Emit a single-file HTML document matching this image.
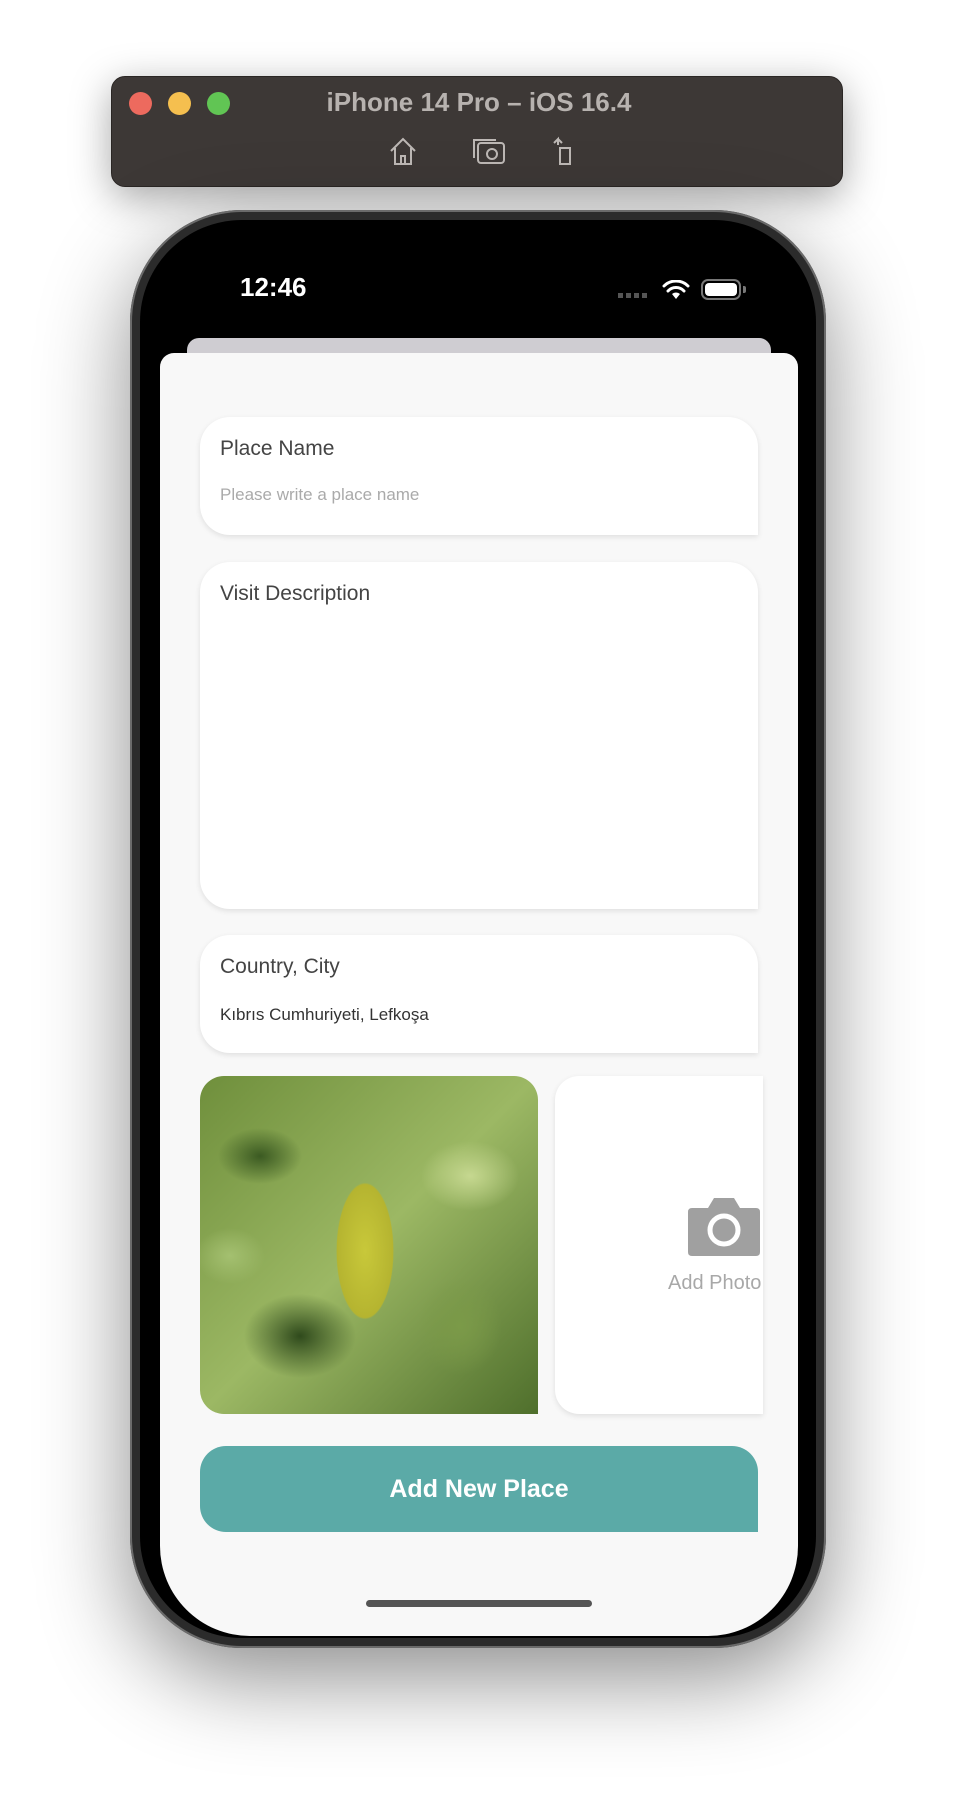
<!DOCTYPE html>
<html><head><meta charset="utf-8"><style>
*{margin:0;padding:0;box-sizing:border-box}
body{width:958px;height:1804px;background:#fff;position:relative;overflow:hidden;font-family:"Liberation Sans",sans-serif}
.abs{position:absolute}
.bar{left:111px;top:76px;width:732px;height:111px;background:#3d3836;border-radius:14px;box-shadow:0 10px 40px rgba(0,0,0,.35);border:1px solid #2a2624}
.dot{width:23px;height:23px;border-radius:50%;top:92px}
.title{top:87px;left:0;width:958px;text-align:center;color:#b7b2af;font-weight:bold;font-size:26px}
.phone{left:130px;top:210px;width:696px;height:1438px;border-radius:112px;background:#2b2b2b;box-shadow:0 30px 90px rgba(0,0,0,.45),0 0 0 2px #6a6a6a inset}
.screen{left:140px;top:220px;width:676px;height:1418px;border-radius:102px;background:#000;overflow:hidden}
.card{background:#fff;border-radius:30px 30px 0 30px;box-shadow:0 2px 6px rgba(0,0,0,.1)}
.lbl{font-size:21px;color:#444;position:absolute;left:20px}
</style></head><body>
<div class="abs bar"></div>
<div class="abs dot" style="left:129px;background:#ed6a5e"></div>
<div class="abs dot" style="left:168px;background:#f5bf4f"></div>
<div class="abs dot" style="left:207px;background:#61c554"></div>
<div class="abs title">iPhone 14 Pro – iOS 16.4</div>
<svg class="abs" style="left:388px;top:136px" width="200" height="32" viewBox="0 0 200 32" fill="none" stroke="#bdb8b5" stroke-width="2">
<path d="M3 15 L15 3 L27 15 M7 12 V28 H23 V12 M13 28 V20 H17 V28"/>
<rect x="90" y="7" width="26" height="20" rx="3"/><circle cx="104" cy="18" r="5"/><path d="M86 22 V4 H108"/>
<path d="M172 12 H182 V28 H172 Z M170 9 V3 L166 7 M170 3 L174 7"/>
</svg>
<div class="abs phone"></div>
<div class="abs screen">
 <div class="abs" style="left:100px;top:52px;color:#fff;font-size:26px;font-weight:bold">12:46</div>
 <div class="abs" style="left:478px;top:73px;width:32px;height:5px;background:repeating-linear-gradient(90deg,#555 0 5px,transparent 5px 8px)"></div>
 <svg class="abs" style="left:522px;top:60px" width="28" height="20" viewBox="0 0 28 20"><path d="M14 19 L10 14 A6 6 0 0 1 18 14 Z" fill="#fff"/><path d="M6 11 A11 11 0 0 1 22 11 M2 6 A17 17 0 0 1 26 6" stroke="#fff" stroke-width="3" fill="none" stroke-linecap="round"/></svg>
 <div class="abs" style="left:561px;top:59px;width:40px;height:21px;border:2px solid #777;border-radius:7px;padding:2px"><div style="width:100%;height:100%;background:#fff;border-radius:4px"></div></div>
 <div class="abs" style="left:603px;top:66px;width:3px;height:7px;background:#777;border-radius:0 2px 2px 0"></div>
 <div class="abs" style="left:47px;top:118px;width:584px;height:40px;background:#cfcdd2;border-radius:12px"></div>
 <div class="abs" style="left:20px;top:133px;width:638px;height:1283px;background:#f8f8f8;border-radius:14px 14px 90px 90px;overflow:hidden">
  <div class="abs card" style="left:40px;top:64px;width:558px;height:118px"><div class="lbl" style="top:20px">Place Name</div><div class="abs" style="left:20px;top:68px;font-size:17px;color:#aaa">Please write a place name</div></div>
  <div class="abs card" style="left:40px;top:209px;width:558px;height:347px"><div class="lbl" style="top:20px">Visit Description</div></div>
  <div class="abs card" style="left:40px;top:582px;width:558px;height:118px"><div class="lbl" style="top:20px">Country, City</div><div class="abs" style="left:20px;top:70px;font-size:17px;color:#333">Kıbrıs Cumhuriyeti, Lefkoşa</div></div>
  <div class="abs" style="left:40px;top:723px;width:338px;height:338px;border-radius:24px 24px 0 24px;overflow:hidden;background:
   radial-gradient(ellipse 40px 95px at 165px 175px,#c8c83a 0,#b5b430 70%,transparent 72%),
   radial-gradient(ellipse 60px 40px at 60px 80px,#3b5a22 0,transparent 70%),
   radial-gradient(ellipse 70px 50px at 270px 100px,#c6d890 0,transparent 70%),
   radial-gradient(ellipse 80px 60px at 100px 260px,#2f4a1c 0,transparent 70%),
   radial-gradient(ellipse 60px 70px at 260px 250px,#7b9a48 0,transparent 70%),
   radial-gradient(ellipse 50px 40px at 30px 180px,#a4c070 0,transparent 70%),
   linear-gradient(135deg,#6f8f3c,#9cb864 50%,#4f6f2c)"></div>
  <div class="abs card" style="left:395px;top:723px;width:208px;height:338px;border-radius:24px 0 0 24px;overflow:hidden">
   <svg class="abs" style="left:133px;top:116px" width="72" height="64" viewBox="0 0 72 64"><path d="M4 16 H20 L26 6 H46 L52 16 H68 Q72 16 72 20 V60 Q72 64 68 64 H4 Q0 64 0 60 V20 Q0 16 4 16 Z" fill="#a0a0a0"/><circle cx="36" cy="38" r="14" fill="none" stroke="#fff" stroke-width="5"/></svg>
   <div class="abs" style="left:113px;top:196px;font-size:20px;color:#a8a8a8;white-space:nowrap">Add Photo</div>
  </div>
  <div class="abs" style="left:40px;top:1093px;width:558px;height:86px;background:#5baaa7;border-radius:26px 26px 0 26px;color:#fff;font-weight:bold;font-size:25px;text-align:center;line-height:86px">Add New Place</div>
 </div>
 <div class="abs" style="left:226px;top:1380px;width:226px;height:7px;background:#555;border-radius:4px"></div>
</div>
</body></html>
